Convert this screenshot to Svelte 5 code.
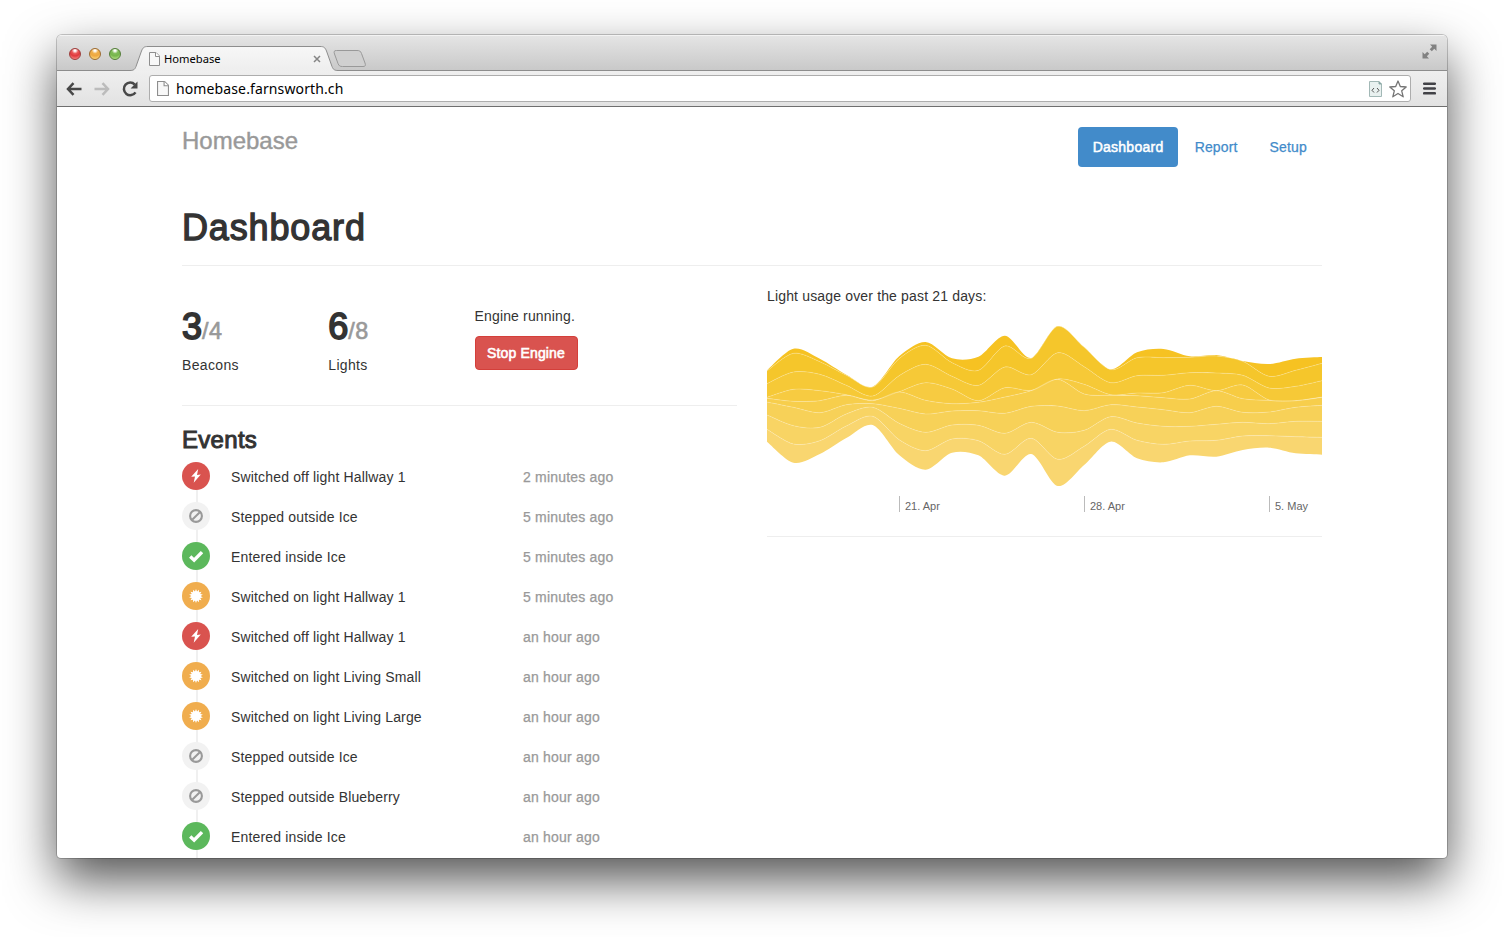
<script>
  const events = [
    ['off', 'Switched off light Hallway 1', '2 minutes ago'],
    ['out', 'Stepped outside Ice', '5 minutes ago'],
    ['in', 'Entered inside Ice', '5 minutes ago'],
    ['on', 'Switched on light Hallway 1', '5 minutes ago'],
    ['off', 'Switched off light Hallway 1', 'an hour ago'],
    ['on', 'Switched on light Living Small', 'an hour ago'],
    ['on', 'Switched on light Living Large', 'an hour ago'],
    ['out', 'Stepped outside Ice', 'an hour ago'],
    ['out', 'Stepped outside Blueberry', 'an hour ago'],
    ['in', 'Entered inside Ice', 'an hour ago']
  ];

  // One row per day: the nine layer boundaries, top to bottom, in thirds of a pixel.
  const days = [
    [166, 168, 206, 247, 250, 261, 300, 343, 380],
    [101, 115, 171, 223, 259, 277, 332, 387, 443],
    [131, 140, 178, 227, 257, 293, 337, 377, 417],
    [179, 181, 211, 239, 241, 269, 297, 333, 369],
    [215, 216, 243, 255, 257, 266, 277, 304, 330],
    [124, 131, 182, 230, 231, 280, 325, 374, 420],
    [81, 91, 148, 203, 256, 297, 352, 407, 464],
    [130, 143, 184, 222, 266, 288, 330, 372, 413],
    [125, 166, 211, 257, 262, 287, 331, 377, 421],
    [62, 93, 156, 218, 246, 295, 355, 418, 482],
    [129, 130, 179, 226, 227, 274, 322, 370, 417],
    [33, 34, 113, 192, 193, 273, 352, 433, 513],
    [96, 97, 155, 208, 237, 287, 346, 394, 450],
    [163, 164, 203, 239, 241, 269, 305, 343, 380],
    [112, 128, 182, 234, 242, 276, 324, 376, 430],
    [102, 128, 181, 233, 248, 284, 334, 388, 442],
    [124, 127, 173, 211, 252, 293, 334, 378, 421],
    [120, 123, 174, 227, 227, 274, 328, 376, 425],
    [138, 139, 181, 210, 251, 292, 322, 363, 405],
    [147, 184, 219, 255, 256, 291, 326, 362, 398],
    [131, 166, 214, 257, 257, 277, 319, 365, 415],
    [126, 145, 197, 246, 247, 271, 319, 367, 419]
  ];
  const colors = ['#f6c222', '#f5c62b', '#f6c937', '#f7cb41', '#f7ce4c', '#f7d158', '#f8d464', '#f9d670'];
  const step = 555 / 21;

  function curve(points) {
    const a = 0.15;
    const tangent = (i) => {
      const p = points[Math.max(0, i - 1)];
      const n = points[Math.min(points.length - 1, i + 1)];
      return [(n[0] - p[0]) * a, (n[1] - p[1]) * a];
    };
    let d = '';
    for (let i = 1; i < points.length; i++) {
      const [s, e] = [tangent(i - 1), tangent(i)];
      const [p, q] = [points[i - 1], points[i]];
      d += `C${p[0] + s[0]},${p[1] + s[1]} ${q[0] - e[0]},${q[1] - e[1]} ${q[0]},${q[1]}`;
    }
    return d;
  }
  const edge = (k) => days.map((row, i) => [i * step, row[k] / 3]);
  const layers = colors.map((fill, k) => {
    const top = edge(k);
    const bottom = edge(k + 1).reverse();
    return {
      fill,
      area: `M${top[0]}${curve(top)}L${bottom[0]}${curve(bottom)}Z`,
      line: k ? `M${top[0]}${curve(top)}` : ''
    };
  });
  const ticks = ['21. Apr', '28. Apr', '5. May'];

  const burst = Array.from({ length: 28 }, (_, i) => {
    const r = i % 2 ? 4.7 : 7;
    const t = (i * Math.PI) / 14;
    return `${7 + r * Math.sin(t)},${7 - r * Math.cos(t)}`;
  }).join(' ');
</script>

{#snippet page(w, h)}
  <svg width={w} height={h} viewBox="0 0 11 14" preserveAspectRatio="none">
    <path d="M.5.5H7L10.500 4V13.500H.5Z" fill="#f8f8f8" stroke="#8e8e8e" />
    <path d="M6.500.5V4.500H10.500" fill="#fff" stroke="#8e8e8e" />
  </svg>
{/snippet}

<div class="window">
  <div class="tabs">
    <div class="lights"><i class="red"></i><i class="amber"></i><i class="green"></i></div>
    <div class="tab">
      <svg class="shape" width="208" height="25" viewBox="0 0 208 25">
        <defs><linearGradient id="tabfill" x2="0" y2="1"><stop stop-color="#f7f7f7" /><stop offset="1" stop-color="#eeeeee" /></linearGradient></defs>
        <path d="M0 24.500C4 24.500 5 23 6 20.500L11.500 5C13 1.500 14 .5 18 .5H190C194 .5 195 1.500 196.500 5L202 20.500C203 23 204 24.500 208 24.500V25H0Z" fill="url(#tabfill)" />
        <path d="M0 24.500C4 24.500 5 23 6 20.500L11.500 5C13 1.500 14 .5 18 .5H190C194 .5 195 1.500 196.500 5L202 20.500C203 23 204 24.500 208 24.500" fill="none" stroke="#8d8d8d" />
      </svg>
      <div class="tabbody">
        {@render page(11, 14)}
        <span>Homebase</span>
        <svg class="close" width="8" height="8" viewBox="0 0 8 8"><path d="M1 1L7 7M7 1L1 7" stroke="#858585" stroke-width="1.500" /></svg>
      </div>
    </div>
    <svg class="newtab" width="34" height="17" viewBox="0 0 34 17"><path d="M3.500.5H24C26.500.5 27.500 1 28.500 3.500L32 13C32.800 15.500 32.500 16.500 30 16.500H9.500C7 16.500 6 16 5 13.500L1.500 4C.7 1.500 1 .5 3.500.5Z" fill="#d0d0d0" stroke="#999" /></svg>
    <svg class="full" width="15" height="15" viewBox="0 0 15 15"><path d="M14.500.5V7L12.300 4.800L9.800 7.300L7.700 5.200L10.200 2.700L8 .5ZM.5 14.500V8L2.700 10.200L5.200 7.700L7.300 9.800L4.800 12.300L7 14.500Z" fill="#828282" /></svg>
  </div>
  <div class="toolbar">
    <svg class="nav" width="16" height="14" viewBox="0 0 16 14"><path d="M7.500 1.200L2 7L7.500 12.800M2.300 7H15.500" fill="none" stroke="#484848" stroke-width="2.500" /></svg>
    <svg class="nav" width="16" height="14" viewBox="0 0 16 14"><path d="M8.500 1.200L14 7L8.500 12.800M13.700 7H.5" fill="none" stroke="#bcbcbc" stroke-width="2.500" /></svg>
    <svg class="nav" width="16" height="16" viewBox="0 0 16 16"><path d="M13.500 11.300A6.300 6.300 0 1 1 12.800 3.600" fill="none" stroke="#484848" stroke-width="2.500" /><path d="M15.500.6V7.500H8.600Z" fill="#484848" /></svg>
    <div class="address">
      {@render page(12, 15)}
      <span>homebase.farnsworth.ch</span>
      <svg class="code" width="13" height="16" viewBox="0 0 13 16"><path d="M.5.5H10L12.500 3V15.500H.5Z" fill="#e9f1f0" stroke="#a2b8b6" /><path d="M10 .5V3H12.500" fill="#779c99" stroke="#8da9a6" /><path d="M5 7L3 9.300L5 11.500M8 7L10 9.300L8 11.500" fill="none" stroke="#555" /></svg>
      <svg class="star" width="18" height="18" viewBox="0 0 18 18"><path d="M9 1L11.300 6.500L17.200 7L12.700 10.800L14.200 16.800L9 13.500L3.800 16.800L5.300 10.800L.8 7L6.700 6.500Z" fill="#fff" stroke="#757575" stroke-width="1.300" stroke-linejoin="round" /></svg>
    </div>
    <svg class="menu" width="13" height="13" viewBox="0 0 13 13"><path d="M1.200 1.700H11.800M1.200 6.500H11.800M1.200 11.300H11.800" stroke="#424247" stroke-width="2.600" stroke-linecap="round" /></svg>
  </div>

  <div class="page">
    <header>
      <div class="brand">Homebase</div>
      <nav><a class="active" href="#dashboard">Dashboard</a><a href="#report">Report</a><a href="#setup">Setup</a></nav>
    </header>
    <h1>Dashboard</h1>
    <div class="columns">
      <section>
        <div class="stats">
          <div class="stat"><div class="count"><b>3</b><small>/4</small></div>Beacons</div>
          <div class="stat"><div class="count"><b>6</b><small>/8</small></div>Lights</div>
          <div class="engine"><p>Engine running.</p><button>Stop Engine</button></div>
        </div>
        <h2>Events</h2>
        <ul>
          {#each events as [kind, text, time]}
            <li>
              <span class="badge {kind}">
                <svg width="14" height="14" viewBox="0 0 14 14">
                  {#if kind === 'off'}
                    <path d="M9.200 0L2.200 7.800L6 7.500L4.700 13.800L11.800 5.600L8 6Z" fill="#fff" />
                  {:else if kind === 'out'}
                    <circle cx="7" cy="7" r="5.900" fill="none" stroke="#999" stroke-width="2.100" /><path d="M3.200 10.800L10.800 3.200" stroke="#999" stroke-width="2" />
                  {:else if kind === 'in'}
                    <path d="M1.200 7.600L5.100 11.200L13 3.100" fill="none" stroke="#fff" stroke-width="3.400" />
                  {:else}
                    <polygon points={burst} fill="#fff" />
                  {/if}
                </svg>
              </span>
              <span class="what">{text}</span>
              <span class="when">{time}</span>
            </li>
          {/each}
        </ul>
      </section>
      <section class="usage">
        <p>Light usage over the past 21 days:</p>
        <svg class="stream" width="555" height="180" viewBox="0 0 555 180">
          {#each layers as layer}<path d={layer.area} fill={layer.fill} />{/each}
          {#each layers as layer}<path d={layer.line} fill="none" stroke="#fff" stroke-opacity=".24" stroke-width=".9" />{/each}
        </svg>
        <div class="axis">{#each ticks as tick}<span>{tick}</span>{/each}</div>
      </section>
    </div>
  </div>
</div>

<style>
  :global(body) { background: #fff; overflow: hidden; }
  .window, .window * { box-sizing: border-box; }
  .window {
    width: 1390px; height: 823px; margin: 35px 57px 79px; overflow: hidden;
    display: flex; flex-direction: column; background: #fff; border-radius: 5px 5px 4px 4px;
    font: 14px/20px "Liberation Sans", Arial, sans-serif; letter-spacing: .16px; color: #333;
    box-shadow: 0 0 0 1px rgba(0, 0, 0, .2), 0 22px 50px rgba(0, 0, 0, .68);
  }
  .window svg { display: block; flex: none; }
  .tabs {
    height: 36px; flex: none; display: flex; align-items: flex-end; padding: 0 10px 0 12px;
    background: linear-gradient(#e5e5e5, #c9c9c9); border-bottom: 1px solid #8d8d8d; box-shadow: inset 0 1px #f3f3f3;
  }
  .lights { display: flex; gap: 8px; width: 64px; padding-bottom: 10px; }
  .lights i { width: 12px; height: 12px; border-radius: 50%; border: 1px solid; }
  .red { background: radial-gradient(circle at 50% 15%, #fff 0 8%, #e95757 32%, #e0393d 55%, #ff9c96); border-color: #9d3e3c !important; }
  .amber { background: radial-gradient(circle at 50% 15%, #fff 0 8%, #efb04c 32%, #efa840 55%, #ffe892); border-color: #9d6b30 !important; }
  .green { background: radial-gradient(circle at 50% 15%, #fff 0 8%, #80bc59 32%, #76b64c 55%, #c9f09a); border-color: #537d38 !important; }
  .tab { display: grid; width: 208px; height: 25px; margin: 0 0 -1px -3px; z-index: 1; }
  .tab > * { grid-area: 1 / 1; }
  .tabbody { display: flex; align-items: center; padding: 0 17px 0 19px; height: 25px; z-index: 1; font: 11.200px/16px "Noto Sans", sans-serif; letter-spacing: 0; color: #000; }
  .tabbody span { flex: 1; padding-left: 4px; }
  .newtab { margin: 0 0 3px -5px; }
  .full { margin: 0 0 11px auto; }
  .toolbar {
    height: 36px; flex: none; display: flex; align-items: center; padding: 0 11px 0 9px;
    background: linear-gradient(#efefef, #e2e2e2); border-bottom: 1px solid #6f6f6f;
  }
  .nav { margin-right: 12px; }
  .nav:nth-child(3) { margin-right: 11px; }
  .address {
    flex: 1; height: 27px; display: flex; align-items: center; padding: 0 3px 0 7px; margin-right: 12px;
    background: #fff; border: 1px solid #adadad; border-radius: 3px; font: 14px/20px "Noto Sans", sans-serif; letter-spacing: .12px; color: #000;
  }
  .address span { flex: 1; padding-left: 7px; }
  .star { margin-left: 7px; }
  .page { flex: 1; min-height: 0; padding: 20px 125px 0; }
  header { display: flex; justify-content: space-between; height: 78px; }
  .brand { font-size: 24px; line-height: 27px; color: #999; -webkit-text-stroke: .4px #999; letter-spacing: 0; }
  nav { display: flex; gap: 2px; height: 40px; }
  nav a { padding: 10px 15px; color: #428bca; text-decoration: none; border-radius: 4px; -webkit-text-stroke: .25px currentColor; }
  nav a.active { width: 100px; background: #428bca; color: #fff; -webkit-text-stroke: .5px #fff; letter-spacing: .26px; }
  h1 { margin: 0; height: 61px; padding-top: 3px; font-size: 36px; font-weight: 400; line-height: 40px; letter-spacing: .85px; border-bottom: 1px solid #eee; -webkit-text-stroke: 1.300px #333; }
  .columns { display: flex; gap: 30px; }
  .columns section { width: 555px; flex: none; }
  .stats { display: flex; height: 140px; padding-top: 40px; border-bottom: 1px solid #eee; }
  .stat { width: 146.250px; letter-spacing: .35px; }
  .count { height: 49px; line-height: 42px; }
  .count b { font-size: 36px; font-weight: 400; -webkit-text-stroke: 1.800px #333; letter-spacing: 0; }
  .count small { font-size: 23.400px; color: #999; -webkit-text-stroke: .6px #999; }
  p { margin: 0; }
  .engine p { height: 30px; }
  button { height: 34px; width: 103px; padding: 0; border: 1px solid #d43f3a; border-radius: 4px; background: #d9534f; color: #fff; font: 14px/20px "Liberation Sans", sans-serif; letter-spacing: .16px; -webkit-text-stroke: .6px #fff; }
  h2 { margin: 20px 0 9px; font-size: 24px; font-weight: 400; line-height: 27px; letter-spacing: .3px; -webkit-text-stroke: 1px #333; }
  ul { list-style: none; margin: 0; padding: 0; background: linear-gradient(#f0f0f0, #f0f0f0) 14px 0 / 2px 100% no-repeat; }
  li { display: flex; height: 40px; line-height: 30px; }
  .badge { width: 28px; height: 28px; border-radius: 50%; display: grid; place-items: center; }
  .off { background: #d9534f; } .out { background: #f2f2f2; } .in { background: #5cb85c; } .on { background: #f0ad4e; }
  .what { width: 292px; margin-left: 21px; }
  .when { color: #999; -webkit-text-stroke: .25px #999; letter-spacing: .2px; }
  .usage p { padding-top: 20px; height: 49px; }
  .usage { height: 271px; border-bottom: 1px solid #eee; }
  .axis { display: flex; margin: 1px 0 0 132px; letter-spacing: 0; }
  .axis span { width: 185px; height: 16px; padding-left: 5px; border-left: 1px solid #bbb; font-size: 11px; line-height: 20px; color: #666; white-space: nowrap; flex: none; }
  .axis span:last-child { width: 53px; }
</style>
